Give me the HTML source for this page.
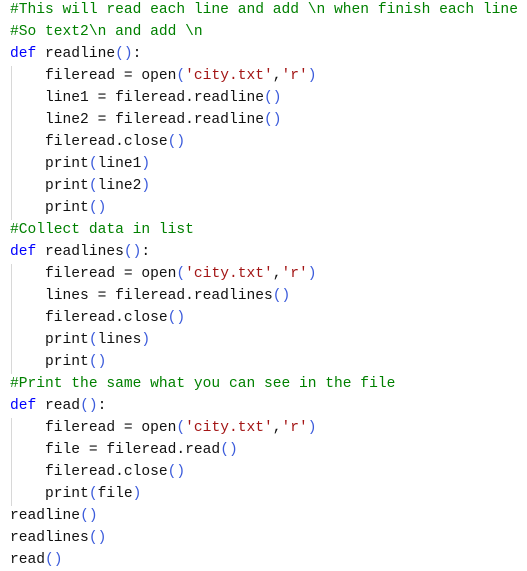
<!DOCTYPE html><html><head><style>
body{margin:0;background:#fff;width:527px;height:569px;overflow:hidden;position:relative}
pre{margin:0;position:absolute;left:10px;top:-1px;font-family:"Liberation Mono",monospace;font-size:14.6px;line-height:22px;color:#111}
.c{color:#008000}.k{color:#0000ff}.s{color:#a31515}.p{color:#3b5bdb}
.g{position:absolute;left:11px;width:1px;background:#d8d8d8}
</style></head><body>
<div class="g" style="top:66px;height:154px"></div>
<div class="g" style="top:264px;height:110px"></div>
<div class="g" style="top:418px;height:88px"></div>
<pre><span class="c">#This will read each line and add \n when finish each line</span>
<span class="c">#So text2\n and add \n</span>
<span class="k">def</span> readline<span class="p">()</span>:
    fileread = open<span class="p">(</span><span class="s">'city.txt'</span>,<span class="s">'r'</span><span class="p">)</span>
    line1 = fileread.readline<span class="p">()</span>
    line2 = fileread.readline<span class="p">()</span>
    fileread.close<span class="p">()</span>
    print<span class="p">(</span>line1<span class="p">)</span>
    print<span class="p">(</span>line2<span class="p">)</span>
    print<span class="p">()</span>
<span class="c">#Collect data in list</span>
<span class="k">def</span> readlines<span class="p">()</span>:
    fileread = open<span class="p">(</span><span class="s">'city.txt'</span>,<span class="s">'r'</span><span class="p">)</span>
    lines = fileread.readlines<span class="p">()</span>
    fileread.close<span class="p">()</span>
    print<span class="p">(</span>lines<span class="p">)</span>
    print<span class="p">()</span>
<span class="c">#Print the same what you can see in the file</span>
<span class="k">def</span> read<span class="p">()</span>:
    fileread = open<span class="p">(</span><span class="s">'city.txt'</span>,<span class="s">'r'</span><span class="p">)</span>
    file = fileread.read<span class="p">()</span>
    fileread.close<span class="p">()</span>
    print<span class="p">(</span>file<span class="p">)</span>
readline<span class="p">()</span>
readlines<span class="p">()</span>
read<span class="p">()</span></pre>
</body></html>
